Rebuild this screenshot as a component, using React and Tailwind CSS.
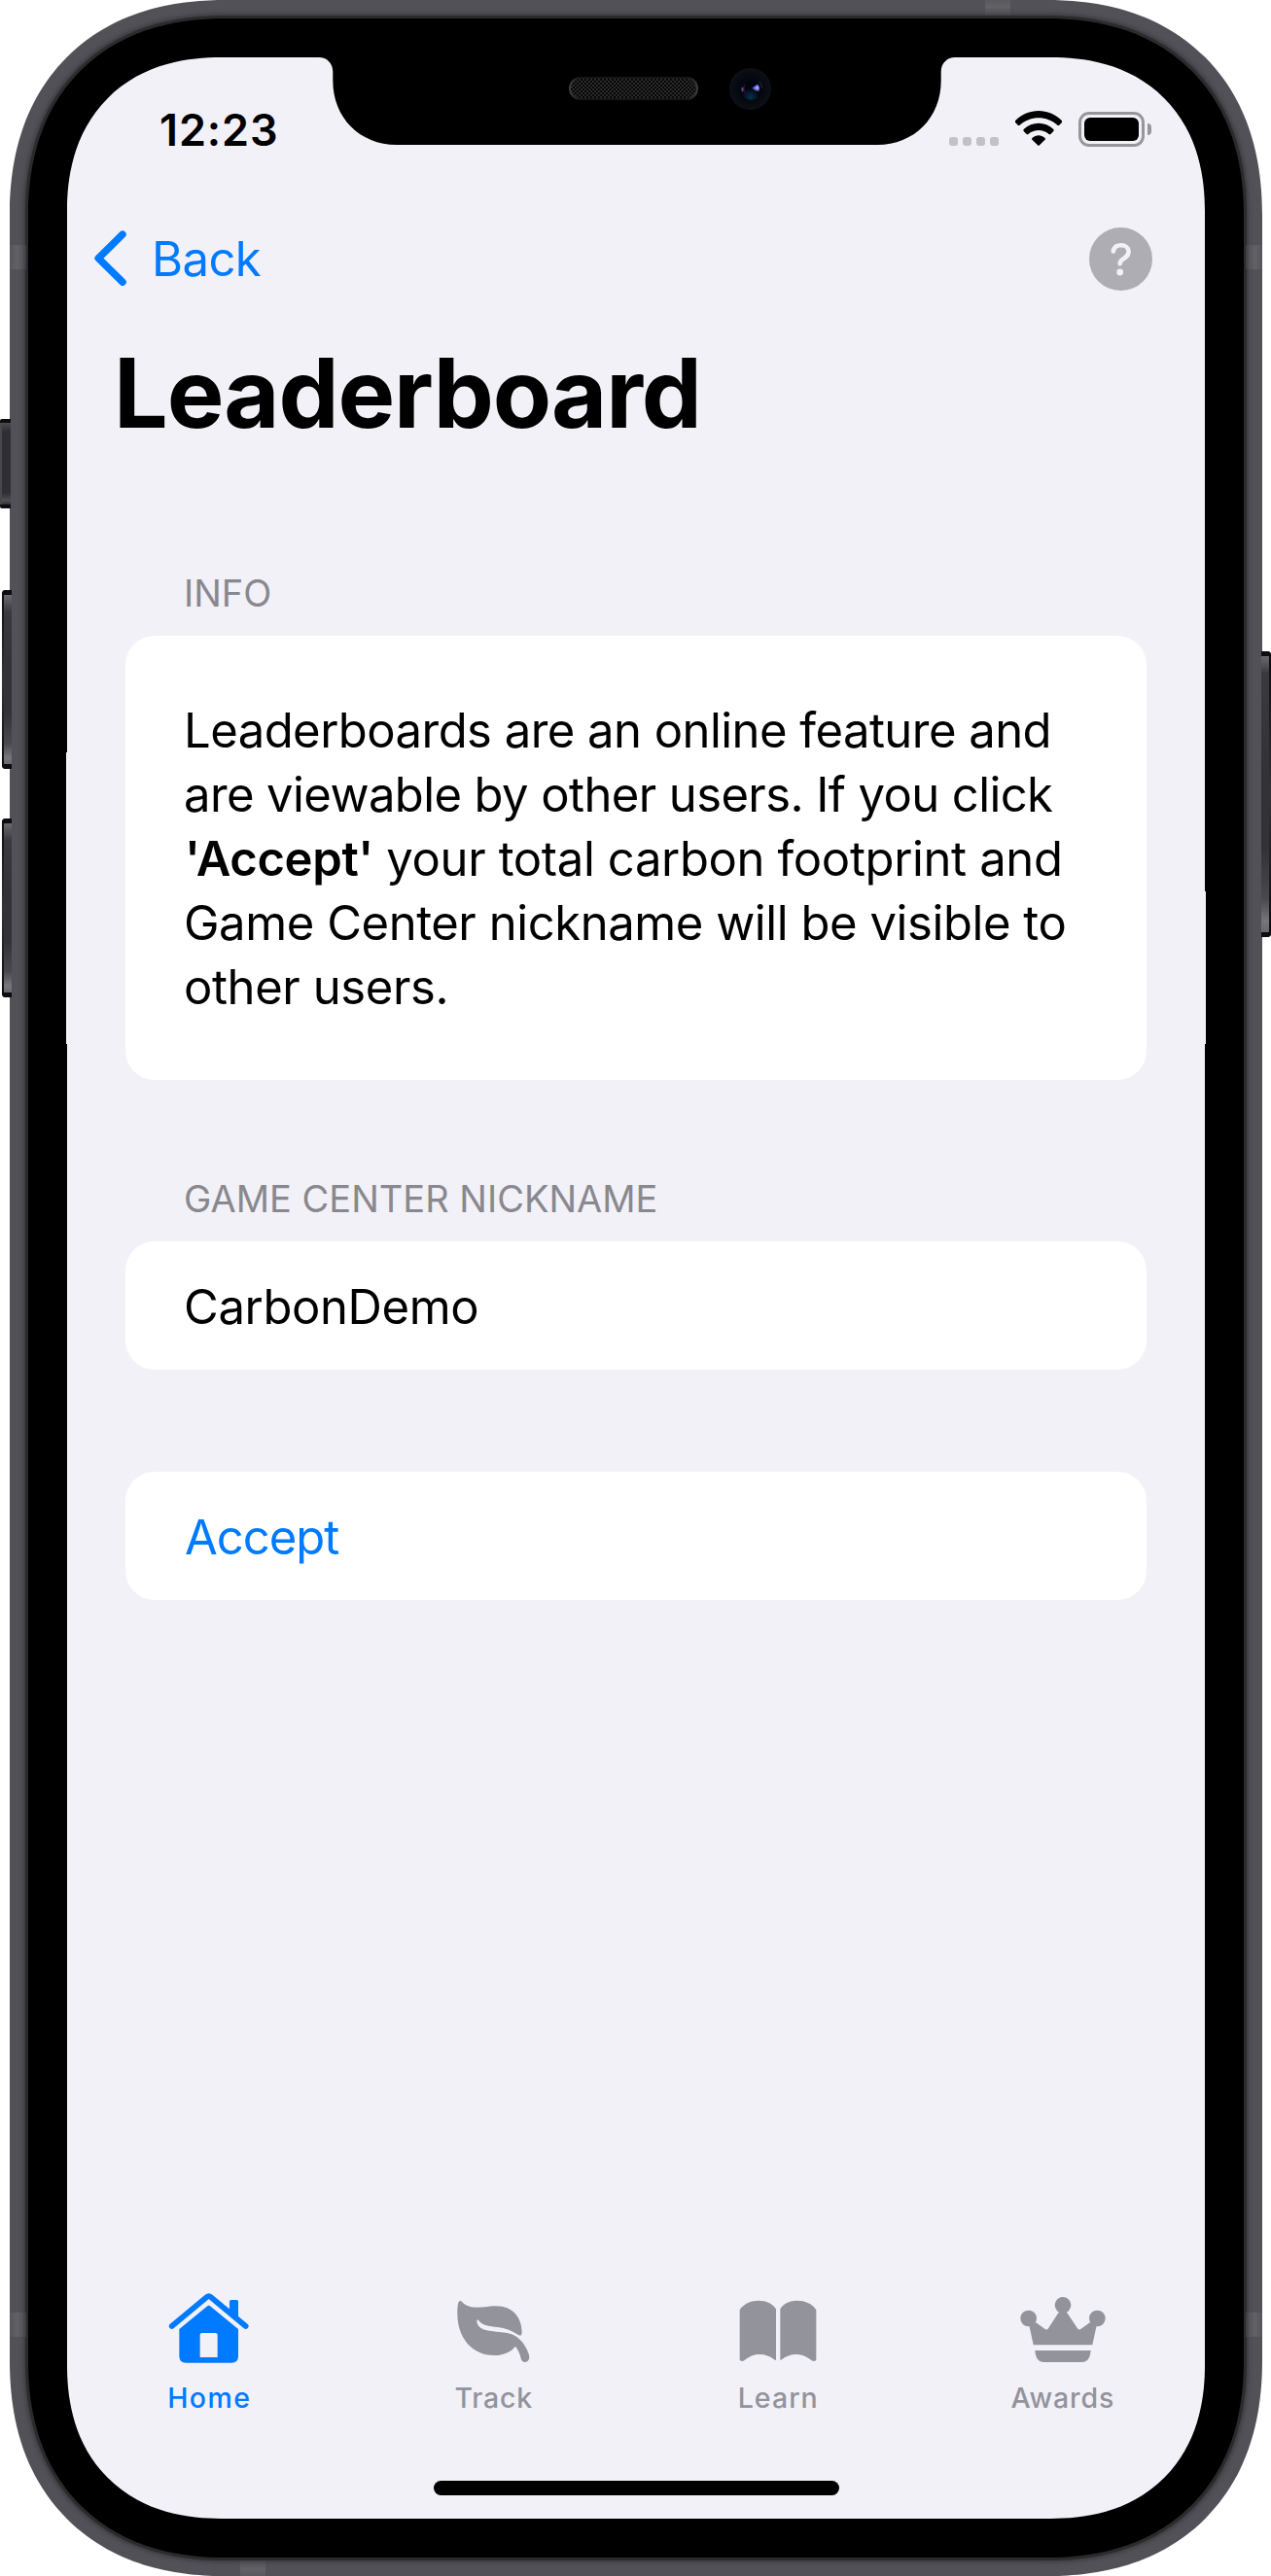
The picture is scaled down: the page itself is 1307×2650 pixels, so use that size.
import React from "react";

function SideButton({ className }) {
  return (
    <div className={"absolute overflow-hidden bg-linear-to-b from-[#0c0c10] via-[#343338] to-[#0c0c10] " + className}>
      <div className="h-[5px] bg-[#0c0c11]" />
      <div className="ml-[2px] h-[calc(100%-10px)] bg-[linear-gradient(to_bottom,#6a696e_0px,#3a393e_18px,#333237_40%,#333237_70%,#4a494e_88%,#77767b_96%,#68676c_100%)]" />
      <div className="h-[5px] bg-[#0c0c11]" />
    </div>
  );
}

function MuteSwitch() {
  return (
    <div className="absolute left-0 top-[431px] h-[92px] w-[11px] overflow-hidden rounded-l-[2px] bg-[#0e0e12] py-[4px]">
      <div className="h-full border-l-2 border-[#48474c] bg-[linear-gradient(to_bottom,#4c4b50_0px,#2f2e33_9px,#2f2e33_72px,#505055_80px,#2f2e33_84px)]" />
    </div>
  );
}

function Bands() {
  return (
    <>
      <div className="absolute left-[10px] top-[252px] h-[25px] w-[17px] bg-[linear-gradient(to_right,#56555a,#626166_45%,#56555a_75%,#3c3b40)]" />
      <div className="absolute left-[10px] top-[2379px] h-[25px] w-[17px] bg-[linear-gradient(to_right,#56555a,#626166_45%,#56555a_75%,#3c3b40)]" />
      <div className="absolute left-[1281px] top-[252px] h-[25px] w-[17px] bg-[linear-gradient(to_left,#56555a,#626166_45%,#56555a_75%,#3c3b40)]" />
      <div className="absolute left-[1281px] top-[2379px] h-[25px] w-[17px] bg-[linear-gradient(to_left,#56555a,#626166_45%,#56555a_75%,#3c3b40)]" />
      <div className="absolute left-[1013px] top-0 h-[16px] w-[26px] bg-[linear-gradient(to_bottom,#5a595e,#626166_45%,#56555a_75%,#444348)]" />
      <div className="absolute left-[247px] top-[2634px] h-[16px] w-[26px] bg-[linear-gradient(to_top,#5a595e,#626166_45%,#56555a_75%,#444348)]" />
    </>
  );
}

function Notch() {
  return (
    <div className="absolute left-[259px] top-0 h-[90px] w-[654px]">
      <svg viewBox="0 0 654 90" className="absolute inset-0 h-full w-full">
        <path
          fill="#000"
          d="M0 -1V0C8 0 14.3 6 14.3 15V24C14.3 62 42 90 80 90H574C612 90 639.7 62 639.7 24V15C639.7 6 646 0 654 0V-1Z"
        />
      </svg>
      <svg viewBox="0 0 133 24" className="absolute left-[257px] top-[20px] h-[24px] w-[133px]">
        <defs>
          <pattern id="mesh" width="4" height="4" patternUnits="userSpaceOnUse">
            <rect width="4" height="4" fill="#060606" />
            <rect width="2" height="2" fill="#2a2b2a" />
            <rect x="2" y="2" width="2" height="2" fill="#2a2b2a" />
          </pattern>
          <linearGradient id="rim">
            <stop offset="0" stopColor="#3c3c3c" />
            <stop offset="0.08" stopColor="#161616" />
            <stop offset="0.92" stopColor="#161616" />
            <stop offset="1" stopColor="#3c3c3c" />
          </linearGradient>
        </defs>
        <rect x="1" y="1" width="131" height="22" rx="11" fill="url(#mesh)" stroke="url(#rim)" strokeWidth="2" />
      </svg>
      <svg viewBox="0 0 43 43" className="absolute left-[422px] top-[11px] h-[43px] w-[43px]">
        <defs>
          <radialGradient id="lens">
            <stop offset="0" stopColor="#02030a" />
            <stop offset="0.6" stopColor="#06080f" />
            <stop offset="1" stopColor="#0d1017" />
          </radialGradient>
          <radialGradient id="glow" cx="0.5" cy="0.85" r="0.5">
            <stop offset="0" stopColor="#04304a" />
            <stop offset="1" stopColor="#02040b" />
          </radialGradient>
        </defs>
        <circle cx="21.5" cy="21.5" r="21.5" fill="url(#lens)" />
        <circle cx="22" cy="23" r="10" fill="url(#glow)" />
        <path d="M16 17c-1.500 3-1 7 1 10" fill="none" stroke="#240842" strokeWidth="2" />
        <ellipse cx="13.5" cy="22" rx="1.2" ry="2.4" fill="#57525d" />
        <path d="M23.5 20.5 29 16.5Q32 19 30.5 23.500Q27 24.500 23.5 20.5Z" fill="#6060d0" />
        <circle cx="28.5" cy="20.2" r="1.700" fill="#a0a6ff" />
        <path d="M31 14q3 3 2.500 7" fill="none" stroke="#2b2b55" strokeWidth="1" />
      </svg>
    </div>
  );
}

function StatusIcons() {
  return (
    <div className="mt-[55px] flex h-[37px] items-start">
      <div className="mt-[27px] flex gap-[5px]">
        {[0, 1, 2, 3].map((i) => (
          <span key={i} className="h-[9px] w-[9px] rounded-[3px] bg-[#c2c1c7]" />
        ))}
      </div>
      <svg viewBox="0 0 144 108" className="ml-[17px] h-[36px] w-[48px]">
        <path d="M0 31C40-10 104-10 144 31Q146 34 143 37L135 45Q132 46 130 44C98 14 46 14 14 44Q12 46 9 45L1 37Q-2 34 0 31Z" />
        <path d="M26 57C52 32 92 32 118 57Q120 60 118 63L109 72Q106 74 103 71C85 56 59 56 41 71Q38 74 35 72L26 63Q24 60 26 57Z" />
        <path d="M53 83C64 73 80 73 91 83Q95 87 91 90L75 106Q72 109 69 106L53 90Q49 87 53 83Z" />
      </svg>
      <div className="ml-[17px] mt-px flex h-[36px] w-[68px] rounded-[11px] border-[3px] border-[#97969c] p-[3px]">
        <div className="flex-1 rounded-[6px] bg-black" />
      </div>
      <div className="ml-[3px] mt-[13px] h-[12px] w-[4px] rounded-r-full bg-[#97969c]" />
    </div>
  );
}

const paragraph = [
  { text: "Leaderboards are an online feature and", style: "tracking-[-0.54px]" },
  { text: "are viewable by other users. If you click", style: "tracking-[-0.6px]" },
  { bold: "'Accept'", text: " your total carbon footprint and", style: "ml-px tracking-[-0.37px]" },
  { text: "Game Center nickname will be visible to", style: "tracking-[-0.44px]" },
  { text: "other users.", style: "tracking-[-0.4px]" },
];

/* Tab icons are drawn on a grid three times finer than the rendered size. */
const HomeIcon = () => (
  <svg viewBox="0 0 264 240" className="h-[80px] w-[88px]" fill="currentColor">
    <g transform="translate(-513 -66)">
      <path d="M530 189 638 99Q644 94 650 99L758 189" fill="none" stroke="currentColor" strokeWidth="17" strokeLinecap="round" strokeLinejoin="round" />
      <path d="M708 140V113Q708 108 713 108H730Q735 108 735 113V165Z" />
      <path
        fillRule="evenodd"
        d="M638 128Q644 123 650 128L735 198V281Q735 302 714 302H574Q553 302 553 281V198ZM617 216V285H671V216Q671 210 665 210H623Q617 210 617 216Z"
      />
    </g>
  </svg>
);

const TrackIcon = () => (
  <svg viewBox="0 0 264 240" className="h-[80px] w-[88px]" fill="currentColor">
    <g transform="translate(-971 -36)">
      <path d="M999 81C1006 81 1010 101 1050 101C1078 101 1085 97 1110 97C1161 97 1190 134 1189 180Q1188 191 1180 187C1160 175 1145 164 1105 161C1078 158 1063 152 1055 140Q1051 136 1050 143C1052 162 1066 171 1100 175C1146 179 1168 180 1190 208C1204 227 1212 245 1212 255C1211 273 1189 275 1186 259C1184 246 1178 233 1169 221C1154 240 1130 249 1104 249C1035 249 990 195 990 120C990 95 992 80 999 81Z" />
    </g>
  </svg>
);

const LearnIcon = () => (
  <svg viewBox="0 0 264 240" className="h-[80px] w-[88px]" fill="currentColor">
    <g transform="translate(-109 -36)">
      <path d="M123 109C135 90 157 80 181 80C205 80 225 89 235 106V262Q235 266 229 262C217 252 202 246 183 246C165 246 150 254 138 264C131 269 123 267 123 260Z" />
      <path d="M248 106C257 90 278 80 300 80C325 80 348 90 359 109V260C359 267 351 269 344 264C332 254 315 246 297 246C280 246 265 252 253 262Q248 266 248 262Z" />
    </g>
  </svg>
);

const AwardsIcon = () => (
  <svg viewBox="0 0 264 240" className="h-[80px] w-[88px]" fill="currentColor">
    <g transform="translate(-986 -36)">
      <circle cx="1012" cy="135" r="25" />
      <circle cx="1118" cy="94" r="25" />
      <circle cx="1224" cy="135" r="25" />
      <path d="M1014 157 1034 147 1063 168Q1069 172 1073 166L1105 116H1130L1163 166Q1167 172 1173 168L1202 147 1222 157 1209 217H1027Z" />
      <path d="M1032 234H1204C1202 258 1194 270 1176 270H1060C1042 270 1034 258 1032 234Z" />
    </g>
  </svg>
);

const tabs = [
  { label: "Home", Icon: HomeIcon, style: "text-[#007aff] tracking-[1.400px]" },
  { label: "Track", Icon: TrackIcon, style: "text-[#93939b] tracking-[0.85px]" },
  { label: "Learn", Icon: LearnIcon, style: "text-[#93939b] tracking-[1.05px]" },
  { label: "Awards", Icon: AwardsIcon, style: "text-[#93939b] tracking-[0.87px]" },
];

function Screen() {
  return (
    <div className="relative flex h-full flex-col overflow-hidden rounded-[158px] bg-[#f2f1f8] text-black [corner-shape:superellipse(1.17)]">
      <Notch />
      <div className="flex h-[142px] shrink-0 justify-between pl-[95px] pr-[55px]">
        <span className="mt-[45px] text-[45px] font-semibold leading-[60px] tracking-[0.9px]">12:23</span>
        <StatusIcons />
      </div>

      <header className="flex h-[131px] shrink-0 items-center justify-between pl-[28px] pr-[54px]">
        <button className="flex items-center text-[49px] leading-[60px] tracking-[-0.6px] text-[#007aff]">
          <svg viewBox="0 0 33 57" className="mb-[2px] mr-[26px] h-[57px] w-[33px]" fill="none" stroke="currentColor" strokeWidth="7.500" strokeLinecap="round" strokeLinejoin="round">
            <path d="M29 4.200 4.200 28.700 29 53.200" />
          </svg>
          Back
        </button>
        <svg viewBox="0 0 65 65" className="h-[65px] w-[65px]">
          <circle cx="32.500" cy="32.500" r="32.500" fill="#aeadb3" />
          <path d="M24.800 24.500C25.500 20.300 28.500 18.300 32.700 18.300C37.400 18.300 40.600 21 40.600 25C40.600 28.300 38.800 30 36 31.700C33 33.500 31.600 34.800 31.600 37.200" fill="none" stroke="#f2f1f8" strokeWidth="4.600" strokeLinecap="round" />
          <circle cx="31.700" cy="46" r="3.400" fill="#f2f1f8" />
        </svg>
      </header>

      <h1 className="ml-[48px] mt-[12px] text-[98.600px] font-bold leading-[120px] tracking-[-1.100px]">Leaderboard</h1>

      <main className="mx-[60px] mt-[122px] flex flex-col">
        <h2 className="pl-[60px] text-[38px] leading-[48px] text-[#89888e]">INFO</h2>
        <section className="mt-[20px] h-[457px] rounded-[30px] bg-white pl-[60px] pt-[65px]">
          <p className="text-[49px] leading-[66px]">
            {paragraph.map(({ bold, text, style }) => (
              <span key={text} className={"block whitespace-pre " + style}>
                {bold && <b className="font-semibold">{bold}</b>}
                {text}
              </span>
            ))}
          </p>
        </section>

        <h2 className="mt-[98px] pl-[60px] text-[38px] leading-[48px] text-[#89888e]">GAME CENTER NICKNAME</h2>
        <div className="mt-[20px] flex h-[132px] items-center rounded-[30px] bg-white pl-[60px] pt-[3px] text-[49px] tracking-[-0.38px]">
          CarbonDemo
        </div>

        <button className="mt-[105px] flex h-[132px] items-center rounded-[30px] bg-white pl-[61px] pt-[3px] text-[49px] tracking-[-1px] text-[#007aff]">
          Accept
        </button>
      </main>

      <nav className="mt-auto grid grid-cols-4">
        {tabs.map(({ label, Icon, style }) => (
          <div key={label} className={"flex flex-col items-center text-[28.500px] font-medium leading-[36px] " + style}>
            <Icon />
            <span className="mt-[17px]">{label}</span>
          </div>
        ))}
      </nav>
      <div className="mx-auto mb-[24px] mt-[67px] h-[15px] w-[417px] shrink-0 rounded-full bg-black" />
    </div>
  );
}

export default function App() {
  return (
    <div className="relative h-[2650px] w-[1307px] overflow-hidden bg-white font-[Inter,sans-serif]">
      <MuteSwitch />
      <SideButton className="left-[2px] top-[607px] h-[184px] w-[10px] rounded-l-[4px]" />
      <SideButton className="left-[2px] top-[842px] h-[184px] w-[10px] rounded-l-[4px]" />

      <div className="ml-[10px] h-[2650px] w-[1288px] rounded-[222px] bg-[#525158] p-[16px] [corner-shape:superellipse(1.17)]">
        <div className="h-full rounded-[206px] bg-[#2b2b2c] p-[3px] shadow-[0_0_5px_1px_#34333a] [corner-shape:superellipse(1.17)]">
          <div className="h-full rounded-[203px] bg-black p-[40px] [corner-shape:superellipse(1.17)]">
            <Screen />
          </div>
        </div>
      </div>

      <Bands />
      <SideButton className="left-[1297px] top-[670px] h-[294px] w-[10px] -scale-x-100 rounded-l-[4px]" />
      <div className="absolute left-[68px] top-[774px] h-[300px] w-px bg-[#f2f1f8]" />
      <div className="absolute left-[1239px] top-[917px] h-[157px] w-px bg-[#f2f1f8]" />
    </div>
  );
}
